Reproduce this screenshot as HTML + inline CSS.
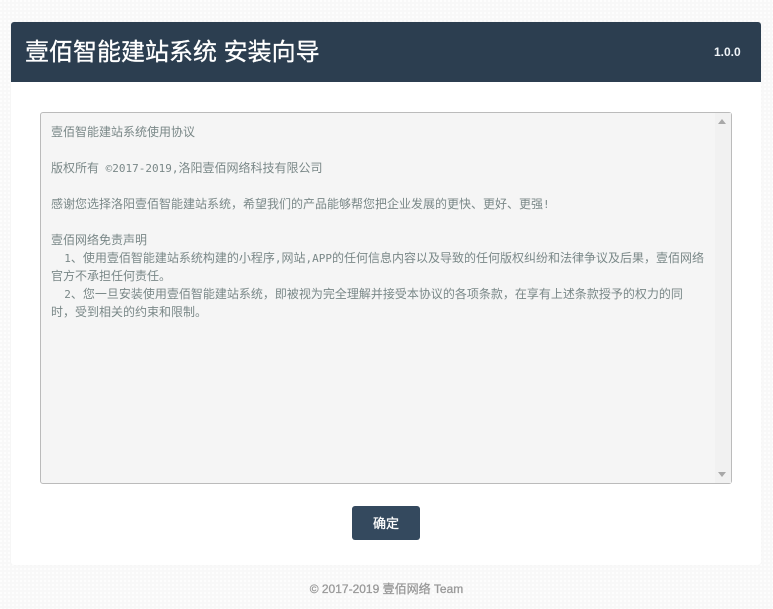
<!DOCTYPE html>
<html lang="zh">
<head>
<meta charset="utf-8">
<title>壹佰智能建站系统 安装向导</title>
<style>
html,body{margin:0;padding:0}
body{width:773px;height:609px;position:relative;overflow:hidden;background-color:#f8f8f8;
background-image:radial-gradient(circle at 1px 1px,#fff 0.9px,transparent 1px);background-size:4px 4px;
font-family:"Liberation Sans","WenQuanYi Zen Hei","Noto Sans CJK SC",sans-serif}
.card{position:absolute;left:11px;top:22px;width:750px;height:543px;background:#fff;border-radius:3px;box-shadow:0 0 1px #e8e8e8}
.head{position:absolute;left:11px;top:22px;width:750px;height:60px;background:#2c3e50;border-radius:3px 3px 0 0}
.title{position:absolute;left:25px;top:38px;font-size:24px;line-height:30px;color:#fff;white-space:pre;-webkit-text-stroke:0.3px #fff;font-family:"Liberation Sans","Noto Sans CJK SC",sans-serif}
.ver{position:absolute;left:714px;top:44px;font-size:12px;line-height:16px;font-weight:bold;color:#f0f4f8}
.box{position:absolute;left:40px;top:112px;width:690px;height:370px;background:#f5f5f5;border:1px solid #bbb;border-radius:3px}
.bar{position:absolute;right:0;top:0;bottom:0;width:16px;background:#f1f1f1}
.up{position:absolute;left:718px;top:119px;width:0;height:0;border-left:4px solid transparent;border-right:4px solid transparent;border-bottom:5px solid #a8a8a8}
.down{position:absolute;left:718px;top:472px;width:0;height:0;border-left:4px solid transparent;border-right:4px solid transparent;border-top:5px solid #a8a8a8}
.l{position:absolute;left:51px;font-size:12px;line-height:18px;height:18px;color:#7a8888;white-space:pre;font-family:"WenQuanYi Zen Hei","Noto Sans CJK SC",sans-serif}
.l b{font-weight:normal;font-family:"DejaVu Sans Mono",monospace;font-size:11px}
.btn{position:absolute;left:352px;top:506px;width:68px;height:34px;background:#34495e;border-radius:3px;color:#fff;font-size:13px;line-height:35px;text-align:center;-webkit-text-stroke:0.3px #fff;font-family:"Liberation Sans","Noto Sans CJK SC",sans-serif}
.foot{position:absolute;left:0;width:773px;top:581px;text-align:center;font-size:12px;line-height:16px;color:#999;-webkit-text-stroke:0.3px #999;font-family:"Liberation Sans","Noto Sans CJK SC",sans-serif}
</style>
</head>
<body>
<div class="card"></div>
<div class="head"></div>
<div class="title">壹佰智能建站系统 安装向导</div>
<div class="ver">1.0.0</div>
<div class="box"><div class="bar"></div></div>
<div class="up"></div>
<div class="down"></div>
<div class="l" style="top:123px">壹佰智能建站系统使用协议</div>
<div class="l" style="top:159px">版权所有<b> ©2017-2019,</b>洛阳壹佰网络科技有限公司</div>
<div class="l" style="top:195px">感谢您选择洛阳壹佰智能建站系统，希望我们的产品能够帮您把企业发展的更快、更好、更强<b>!</b></div>
<div class="l" style="top:231px">壹佰网络免责声明</div>
<div class="l" style="top:249px"><b>  1</b>、使用壹佰智能建站系统构建的小程序<b>,</b>网站<b>,APP</b>的任何信息内容以及导致的任何版权纠纷和法律争议及后果，壹佰网络</div>
<div class="l" style="top:267px">官方不承担任何责任。</div>
<div class="l" style="top:285px"><b>  2</b>、您一旦安装使用壹佰智能建站系统，即被视为完全理解并接受本协议的各项条款，在享有上述条款授予的权力的同</div>
<div class="l" style="top:303px">时，受到相关的约束和限制。</div>
<div class="btn">确定</div>
<div class="foot">© 2017-2019 壹佰网络 Team</div>
</body>
</html>
